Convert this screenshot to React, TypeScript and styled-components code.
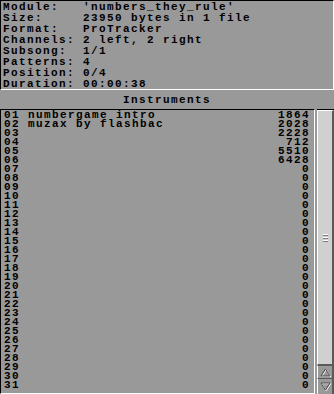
import styled, { createGlobalStyle } from 'styled-components';

const GlobalStyle = createGlobalStyle`
  html, body {
    margin: 0;
    padding: 0;
    background: #999999;
  }
`;

const info: [string, string][] = [
  ['Module:', "'numbers_they_rule'"],
  ['Size:', '23950 bytes in 1 file'],
  ['Format:', 'ProTracker'],
  ['Channels:', '2 left, 2 right'],
  ['Subsong:', '1/1'],
  ['Patterns:', '4'],
  ['Position:', '0/4'],
  ['Duration:', '00:00:38'],
];

const names: Record<number, string> = {
  1: 'numbergame intro',
  2: 'muzax by flashbac',
};

const sizes = [1864, 2028, 2228, 712, 5510, 6428];

const instruments = Array.from({ length: 31 }, (_, i) => ({
  num: String(i + 1).padStart(2, '0'),
  name: names[i + 1] ?? '',
  size: sizes[i] ?? 0,
}));

const App = () => {
  return (
    <Window>
      <GlobalStyle />
      <InfoPanel>
        {info.map(([label, value]) => (
          <InfoRow key={label}>
            <Label>{label}</Label>
            <span>{value}</span>
          </InfoRow>
        ))}
      </InfoPanel>
      <SectionTitle>Instruments</SectionTitle>
      <ListArea>
        <ListBox>
          {instruments.map((ins) => (
            <Row key={ins.num}>
              <span>
                {ins.num} {ins.name}
              </span>
              <span>{ins.size}</span>
            </Row>
          ))}
        </ListBox>
        <ScrollBar>
          <Thumb>
            <Grip>
              <i />
              <i />
              <i />
            </Grip>
          </Thumb>
          <ArrowButton $height={13}>
            <svg width="11" height="9" viewBox="0 0 11 9">
              <path d="M5.5 1 L10 8 L1 8 Z" fill="none" stroke="#ffffff" strokeWidth="1" transform="translate(0.7 0.7)" />
              <path d="M5.5 1 L10 8 L1 8 Z" fill="none" stroke="#4a4a4a" strokeWidth="1" />
            </svg>
          </ArrowButton>
          <ArrowButton $height={16}>
            <svg width="11" height="9" viewBox="0 0 11 9">
              <path d="M1 1 L10 1 L5.5 8 Z" fill="none" stroke="#ffffff" strokeWidth="1" transform="translate(0.7 0.7)" />
              <path d="M1 1 L10 1 L5.5 8 Z" fill="none" stroke="#4a4a4a" strokeWidth="1" />
            </svg>
          </ArrowButton>
        </ScrollBar>
      </ListArea>
    </Window>
  );
};

export default App;

const Window = styled.div`
  width: 334px;
  height: 394px;
  display: flex;
  flex-direction: column;
  background: #999999;
  color: #000000;
  font-family: 'Liberation Mono', 'DejaVu Sans Mono', monospace;
  font-weight: bold;
  font-size: 11px;
  letter-spacing: 1.4px;
  overflow: hidden;
`;

const InfoPanel = styled.div`
  box-sizing: border-box;
  height: 90px;
  padding: 1px 0 0 2px;
  border-top: 1px solid #000000;
  border-left: 1px solid #000000;
  border-right: 1px solid #ffffff;
  border-bottom: 1px solid #ffffff;
  overflow: hidden;
`;

const InfoRow = styled.div`
  display: flex;
  height: 11px;
  line-height: 11px;
  white-space: pre;
`;

const Label = styled.span`
  width: 80px;
  flex-shrink: 0;
`;

const SectionTitle = styled.div`
  box-sizing: border-box;
  height: 19px;
  padding-top: 5px;
  line-height: 11px;
  text-align: center;
`;

const ListArea = styled.div`
  flex: 1;
  display: flex;
  gap: 2px;
  min-height: 0;
`;

const ListBox = styled.div`
  flex: 1;
  box-sizing: border-box;
  padding: 1px 4px 0 3px;
  border-top: 1px solid #000000;
  border-left: 1px solid #000000;
  border-right: 1px solid #ffffff;
  border-bottom: 1px solid #ffffff;
`;

const Row = styled.div`
  display: flex;
  justify-content: space-between;
  height: 9px;
  line-height: 9px;
  white-space: pre;
`;

const ScrollBar = styled.div`
  width: 17px;
  display: flex;
  flex-direction: column;
  box-sizing: border-box;
  border-top: 1px solid #000000;
  background: #999999;
`;

const Thumb = styled.div`
  flex: 1;
  display: flex;
  align-items: center;
  justify-content: center;
  background: #d0d0d0;
  border-top: 1px solid #ffffff;
  border-left: 1px solid #ffffff;
  border-right: 2px solid #5a5a5a;
  border-bottom: 1px solid #5a5a5a;
`;

const Grip = styled.div`
  display: flex;
  flex-direction: column;
  gap: 1px;

  i {
    display: block;
    width: 5px;
    height: 1px;
    background: #ffffff;
    border-bottom: 1px solid #7a7a7a;
  }
`;

const ArrowButton = styled.div<{ $height: number }>`
  box-sizing: border-box;
  height: ${(p) => p.$height}px;
  display: flex;
  align-items: center;
  justify-content: center;
  background: #999999;
  border-top: 1px solid #5a5a5a;
  border-left: 1px solid #ffffff;
  border-right: 2px solid #5a5a5a;
`;
